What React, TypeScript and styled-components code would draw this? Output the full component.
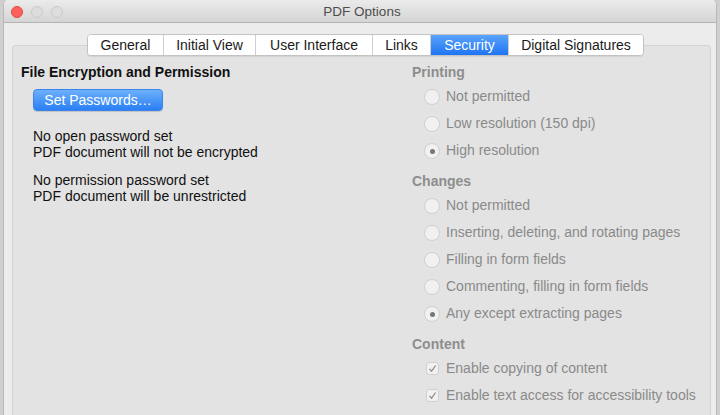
import React from "react";
import styled, { createGlobalStyle } from "styled-components";

const GlobalStyle = createGlobalStyle`
  html, body {
    margin: 0;
    padding: 0;
    background: #d0d0d0;
    font-family: "Liberation Sans", Arial, sans-serif;
  }
`;

const tabs = [
  { label: "General", width: 75 },
  { label: "Initial View", width: 92 },
  { label: "User Interface", width: 117 },
  { label: "Links", width: 58 },
  { label: "Security", width: 78 },
  { label: "Digital Signatures", width: 135 },
];

const printing = [
  { label: "Not permitted", on: false },
  { label: "Low resolution (150 dpi)", on: false },
  { label: "High resolution", on: true },
];

const changes = [
  { label: "Not permitted", on: false },
  { label: "Inserting, deleting, and rotating pages", on: false },
  { label: "Filling in form fields", on: false },
  { label: "Commenting, filling in form fields", on: false },
  { label: "Any except extracting pages", on: true },
];

const content = ["Enable copying of content", "Enable text access for accessibility tools"];

const App = () => {
  return (
    <>
      <GlobalStyle />
      <Desktop>
        <Window>
          <TitleBar>
            <Lights>
              <Light $color="#fc605c" $border="#de4a43" />
              <Light $color="#dddddd" $border="#c9c9c9" />
              <Light $color="#dddddd" $border="#c9c9c9" />
            </Lights>
            <Title>PDF Options</Title>
          </TitleBar>
          <Body>
            <TabBar>
              {tabs.map((t) => (
                <Tab key={t.label} $active={t.label === "Security"} $width={t.width}>
                  {t.label}
                </Tab>
              ))}
            </TabBar>
            <Panel>
              <LeftColumn>
                <Heading>File Encryption and Permission</Heading>
                <Indented>
                  <BlueButton>Set Passwords…</BlueButton>
                  <InfoBlock>
                    <span>No open password set</span>
                    <span>PDF document will not be encrypted</span>
                  </InfoBlock>
                  <InfoBlock>
                    <span>No permission password set</span>
                    <span>PDF document will be unrestricted</span>
                  </InfoBlock>
                </Indented>
              </LeftColumn>
              <RightColumn>
                <Heading $disabled>Printing</Heading>
                <OptionList>
                  {printing.map((o) => (
                    <Option key={o.label}>
                      <Radio $on={o.on} />
                      {o.label}
                    </Option>
                  ))}
                </OptionList>
                <Heading $disabled>Changes</Heading>
                <OptionList>
                  {changes.map((o) => (
                    <Option key={o.label}>
                      <Radio $on={o.on} />
                      {o.label}
                    </Option>
                  ))}
                </OptionList>
                <Heading $disabled>Content</Heading>
                <OptionList>
                  {content.map((c) => (
                    <Option key={c}>
                      <Check>
                        <svg width="9" height="9" viewBox="0 0 9 9">
                          <path d="M1.5 4.8 L3.6 7.2 L7.6 1.5" fill="none" stroke="#8a8a8a" strokeWidth="1.2" />
                        </svg>
                      </Check>
                      {c}
                    </Option>
                  ))}
                </OptionList>
              </RightColumn>
            </Panel>
          </Body>
        </Window>
      </Desktop>
    </>
  );
};

export default App;

const Desktop = styled.div`
  width: 720px;
  height: 415px;
  overflow: hidden;
  display: flex;
  padding-left: 3px;
  box-sizing: border-box;
  background: #cfcfcf;
`;

const Window = styled.div`
  width: 714px;
  height: 430px;
  display: flex;
  flex-direction: column;
  background: #ececec;
  border-left: 1px solid #b8b8b8;
  border-right: 1px solid #b8b8b8;
  border-radius: 5px 5px 0 0;
  box-sizing: border-box;
  overflow: hidden;
`;

const TitleBar = styled.div`
  height: 23px;
  flex-shrink: 0;
  display: flex;
  align-items: center;
  justify-content: center;
  position: relative;
  background: linear-gradient(#ebebeb, #d5d5d5);
  border-bottom: 1px solid #b4b4b4;
  box-sizing: border-box;
`;

const Lights = styled.div`
  position: absolute;
  left: 7px;
  top: 6px;
  display: flex;
  gap: 8px;
`;

const Light = styled.div<{ $color: string; $border: string }>`
  width: 12px;
  height: 12px;
  border-radius: 50%;
  background: ${(p) => p.$color};
  border: 1px solid ${(p) => p.$border};
  box-sizing: border-box;
`;

const Title = styled.div`
  font-size: 13.5px;
  color: #4d4d4d;
  margin-left: 4px;
`;

const Body = styled.div`
  flex: 1;
  display: flex;
  flex-direction: column;
  padding: 11px 5px 0 8px;
`;

const TabBar = styled.div`
  align-self: center;
  display: flex;
  margin-left: 8px;
  margin-bottom: -11px;
  position: relative;
  z-index: 1;
  background: #ffffff;
  border: 1px solid #c3c3c3;
  border-radius: 4px;
  box-shadow: 0 1px 1px rgba(0, 0, 0, 0.08);
  overflow: hidden;
`;

const Tab = styled.div<{ $active?: boolean; $width: number }>`
  width: ${(p) => p.$width}px;
  box-sizing: border-box;
  height: 20px;
  line-height: 20px;
  text-align: center;
  font-size: 14px;
  color: ${(p) => (p.$active ? "#ffffff" : "#1a1a1a")};
  background: ${(p) => (p.$active ? "linear-gradient(#5aa4fb, #1f74f3)" : "#ffffff")};
  border-left: 1px solid #cfcfcf;

  &:first-child {
    border-left: none;
  }
`;

const Panel = styled.div`
  flex: 1;
  display: flex;
  padding: 18px 8px 0 8px;
  background: #e3e3e3;
  border: 1px solid #d4d4d4;
  border-bottom: none;
  border-radius: 4px 4px 0 0;
`;

const LeftColumn = styled.div`
  width: 391px;
  display: flex;
  flex-direction: column;
`;

const RightColumn = styled.div`
  flex: 1;
  display: flex;
  flex-direction: column;
`;

const Heading = styled.div<{ $disabled?: boolean }>`
  font-size: 14px;
  font-weight: bold;
  line-height: 16px;
  color: ${(p) => (p.$disabled ? "#8e8e8e" : "#111111")};
`;

const Indented = styled.div`
  display: flex;
  flex-direction: column;
  align-items: flex-start;
  padding-left: 12px;
  padding-top: 9px;
`;

const BlueButton = styled.div`
  width: 130px;
  height: 22px;
  box-sizing: border-box;
  display: flex;
  align-items: center;
  justify-content: center;
  font-size: 14px;
  color: #ffffff;
  border-radius: 4px;
  background: linear-gradient(#6db0fb, #2a7ff5);
  border: 1px solid #3a84ec;
  box-shadow: 0 1px 1px rgba(0, 0, 0, 0.15);
  margin-bottom: 17px;
`;

const InfoBlock = styled.div`
  display: flex;
  flex-direction: column;
  font-size: 14px;
  line-height: 16px;
  color: #111111;
  margin-bottom: 12px;
`;

const OptionList = styled.div`
  display: flex;
  flex-direction: column;
  padding: 8px 0 15px 12px;
  gap: 11px;
`;

const Option = styled.div`
  display: flex;
  align-items: center;
  gap: 6px;
  height: 16px;
  font-size: 14px;
  color: #8a8a8a;
`;

const Radio = styled.div<{ $on?: boolean }>`
  width: 16px;
  height: 16px;
  border-radius: 50%;
  box-sizing: border-box;
  border: 1px solid #d0d0d0;
  background: #f1f1f1;
  display: flex;
  align-items: center;
  justify-content: center;
  margin-top: 2px;

  &::after {
    content: "";
    width: 5px;
    height: 5px;
    border-radius: 50%;
    background: #777777;
    display: ${(p) => (p.$on ? "block" : "none")};
  }
`;

const Check = styled.div`
  width: 13px;
  height: 13px;
  margin-left: 2px;
  margin-right: 1px;
  border-radius: 3px;
  box-sizing: border-box;
  border: 1px solid #d0d0d0;
  background: #f1f1f1;
  display: flex;
  align-items: center;
  justify-content: center;
`;
